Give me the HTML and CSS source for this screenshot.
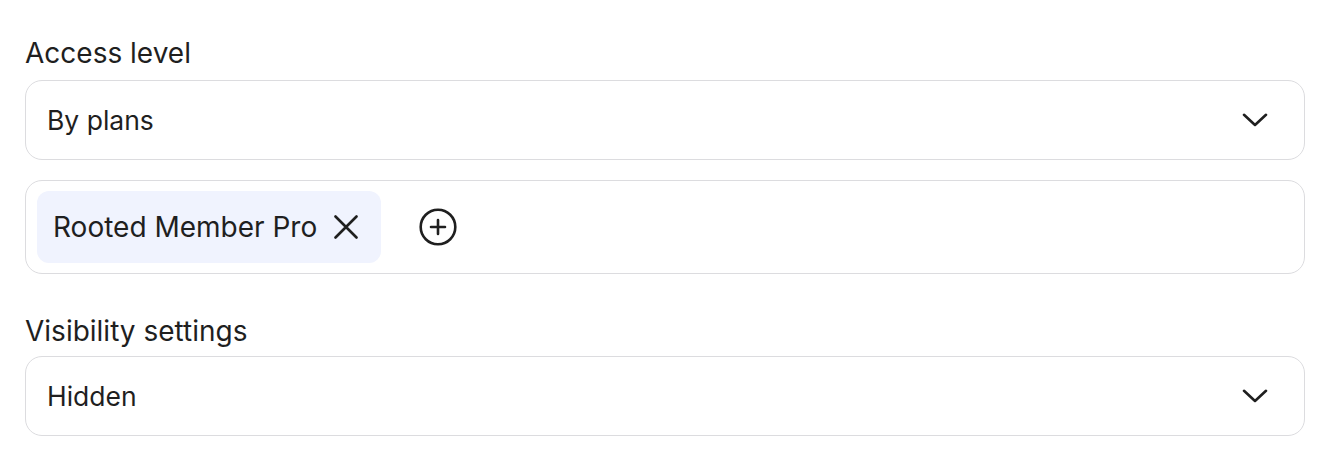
FILE: index.html
```html
<!DOCTYPE html>
<html lang="en">
<head>
<meta charset="utf-8">
<link rel="stylesheet" href="styles.css">
</head>
<body>
<div class="form">
  <section class="field">
    <label class="label">Access level</label>
    <div class="select">
      <span class="select-value">By plans</span>
      <svg class="chevron" width="26" height="14" viewBox="0 0 26 14"><path d="M2 1.8 L13 12 L24 1.8" fill="none" stroke="#1f1f1f" stroke-width="2.6" stroke-linecap="round" stroke-linejoin="round"/></svg>
    </div>
    <div class="tags">
      <div class="chip">
        <span class="chip-text">Rooted Member Pro</span>
        <svg class="chip-x" width="24" height="24" viewBox="0 0 24 24"><path d="M1.5 1.5 L22.5 22.5 M22.5 1.5 L1.5 22.5" fill="none" stroke="#1f1f1f" stroke-width="2.6" stroke-linecap="round"/></svg>
      </div>
      <svg class="add" width="38" height="38" viewBox="0 0 38 38"><circle cx="19" cy="19" r="17.3" fill="none" stroke="#1f1f1f" stroke-width="2.6"/><path d="M19 12 V26 M12 19 H26" fill="none" stroke="#1f1f1f" stroke-width="2.6" stroke-linecap="round"/></svg>
    </div>
  </section>
  <section class="field field-second">
    <label class="label">Visibility settings</label>
    <div class="select">
      <span class="select-value">Hidden</span>
      <svg class="chevron" width="26" height="14" viewBox="0 0 26 14"><path d="M2 1.8 L13 12 L24 1.8" fill="none" stroke="#1f1f1f" stroke-width="2.6" stroke-linecap="round" stroke-linejoin="round"/></svg>
    </div>
  </section>
</div>
</body>
</html>
```
FILE: styles.css
```css
* { box-sizing: border-box; }
html, body { margin: 0; padding: 0; background: #ffffff; }
body {
  font-family: Inter, "Noto Sans", sans-serif;
  color: #1f1f1f;
}
.form {
  width: 1280px;
  margin-left: 25px;
  padding-top: 35px;
}
.field { display: flex; flex-direction: column; }
.field-second { margin-top: 39px; }
.label {
  font-size: 28px;
  line-height: 36px;
  margin-bottom: 9px;
}
.field-second .label { margin-bottom: 7px; }
.select {
  height: 80px;
  border: 1px solid #dcdcdf;
  border-radius: 17px;
  display: flex;
  align-items: center;
  justify-content: space-between;
  padding: 0 36px 0 21px;
}
.select-value {
  font-size: 26.5px;
  line-height: 36px;
}
.chevron { display: block; }
.tags {
  margin-top: 20px;
  height: 94px;
  border: 1px solid #dcdcdf;
  border-radius: 17px;
  padding: 10px 11px;
  display: flex;
  align-items: center;
  gap: 38px;
}
.chip {
  height: 72px;
  background: #f0f3fe;
  border-radius: 12px;
  display: flex;
  align-items: center;
  padding: 0 23px 0 16px;
  gap: 17px;
}
.chip-text { font-size: 28px; line-height: 36px; }
.chip-x { display: block; }
.add { display: block; }
```
